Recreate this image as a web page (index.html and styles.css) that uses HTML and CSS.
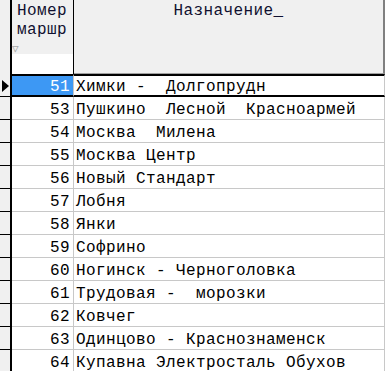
FILE: index.html
```html
<!DOCTYPE html>
<html lang="ru">

<head>
    <meta charset="UTF-8">
    <meta name="viewport" content="width=device-width, initial-scale=1.0">
    <title>Маршруты</title>
    <link rel="stylesheet" href="styles.css">
</head>

<body>
    <div class="grid">
        <div class="head">
            <div class="ind"></div>
            <div class="num-head">
                <div class="title">Номер<br>маршр<span class="sort">&#9661;</span></div>
                <div class="filter"></div>
            </div>
            <div class="name-head">Назначение_</div>
        </div>

        <div class="row current">
            <div class="ind"><span class="arrow"></span></div>
            <div class="num">51</div>
            <div class="name">Химки -  Долгопрудн</div>
        </div>
        <div class="row">
            <div class="ind"></div>
            <div class="num">53</div>
            <div class="name">Пушкино  Лесной  Красноармей</div>
        </div>
        <div class="row">
            <div class="ind"></div>
            <div class="num">54</div>
            <div class="name">Москва  Милена</div>
        </div>
        <div class="row">
            <div class="ind"></div>
            <div class="num">55</div>
            <div class="name">Москва Центр</div>
        </div>
        <div class="row">
            <div class="ind"></div>
            <div class="num">56</div>
            <div class="name">Новый Стандарт</div>
        </div>
        <div class="row">
            <div class="ind"></div>
            <div class="num">57</div>
            <div class="name">Лобня</div>
        </div>
        <div class="row">
            <div class="ind"></div>
            <div class="num">58</div>
            <div class="name">Янки</div>
        </div>
        <div class="row">
            <div class="ind"></div>
            <div class="num">59</div>
            <div class="name">Софрино</div>
        </div>
        <div class="row">
            <div class="ind"></div>
            <div class="num">60</div>
            <div class="name">Ногинск - Черноголовка</div>
        </div>
        <div class="row">
            <div class="ind"></div>
            <div class="num">61</div>
            <div class="name">Трудовая -  морозки</div>
        </div>
        <div class="row">
            <div class="ind"></div>
            <div class="num">62</div>
            <div class="name">Ковчег</div>
        </div>
        <div class="row">
            <div class="ind"></div>
            <div class="num">63</div>
            <div class="name">Одинцово - Краснознаменск</div>
        </div>
        <div class="row">
            <div class="ind"></div>
            <div class="num">64</div>
            <div class="name">Купавна Электросталь Обухов</div>
        </div>
    </div>
</body>

</html>
```

FILE: styles.css
```css
* {
    padding: 0;
    margin: 0;
    box-sizing: border-box;
}

html,
body {
    height: 100%;
    width: 100%;
    background-color: #ffffff;
    overflow: hidden;
}

.grid {
    width: 385px;
    font-family: "Liberation Mono", "Courier New", monospace;
    font-size: 16px;
    letter-spacing: 0.4px;
    color: #000;
}

/* header */

.head {
    display: flex;
    height: 74px;
}

.head .ind {
    width: 12px;
    background-color: #f0f0f0;
    border-right: 2px solid #000;
}

.num-head {
    width: 62px;
    display: flex;
    flex-direction: column;
    border-right: 1px solid #000;
}

.num-head .title {
    position: relative;
    height: 54px;
    padding: 2px 0 0 5px;
    line-height: 19px;
    background-color: #f0f0f0;
    color: #101030;
}

.sort {
    position: absolute;
    left: 0;
    top: 44px;
    font-size: 11px;
    line-height: 11px;
    letter-spacing: 0;
    color: #a8a8a8;
}

.num-head .filter {
    flex: 1;
    background-color: #fff;
}

.name-head {
    flex: 1;
    padding-top: 2px;
    line-height: 19px;
    text-align: center;
    background-color: #f0f0f0;
    border-right: 2px solid #808080;
    border-bottom: 1px solid #a0a0a0;
    color: #101030;
}

/* rows */

.row {
    display: flex;
    height: 23px;
}

.row .ind {
    width: 12px;
    background-color: #f0f0f0;
    border-right: 2px solid #000;
    border-bottom: 1px solid #000;
    position: relative;
}

.num,
.name {
    padding-top: 5px;
    line-height: 17px;
    border-right: 1px solid #c8c8c8;
    border-bottom: 1px solid #c8c8c8;
}

.num {
    width: 62px;
    padding-right: 3px;
    text-align: right;
}

.name {
    flex: 1;
    padding-left: 2px;
    white-space: pre;
    overflow: hidden;
}

.row.current .num,
.row.current .name {
    padding-top: 3px;
    border-top: 2px solid #000;
    border-bottom: 2px solid #000;
    line-height: 16px;
}

.row.current .num {
    background-color: #3d98f4;
    color: #fff;
}

.arrow {
    position: absolute;
    left: 2px;
    top: 6px;
    width: 0;
    height: 0;
    border-top: 6px solid transparent;
    border-bottom: 6px solid transparent;
    border-left: 7px solid #000;
}
```
